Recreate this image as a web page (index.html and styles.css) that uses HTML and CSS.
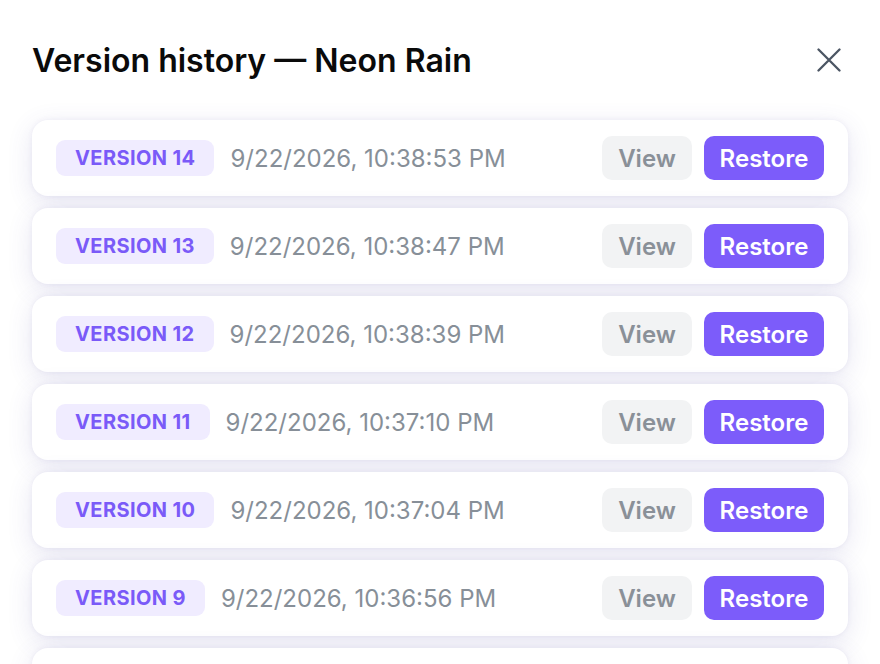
FILE: index.html
```html
<!DOCTYPE html>
<html lang="en">
<head>
<meta charset="utf-8">
<title>Version history</title>
<link rel="stylesheet" href="styles.css">
</head>
<body>
<div class="dialog">
  <header class="head">
    <h1 class="title">Version history — Neon Rain</h1>
    <button class="close" aria-label="Close">
      <svg width="24" height="24" viewBox="0 0 24 24" fill="none" stroke="#4b5563" stroke-width="2.3" stroke-linecap="round"><path d="M1.5 1.5l21 21M22.5 1.5l-21 21"/></svg>
    </button>
  </header>
  <ul class="list">
    <li class="item"><span class="badge">Version 14</span><span class="date">9/22/2026, 10:38:53 PM</span><span class="actions"><button class="btn view">View</button><button class="btn restore">Restore</button></span></li>
    <li class="item"><span class="badge">Version 13</span><span class="date">9/22/2026, 10:38:47 PM</span><span class="actions"><button class="btn view">View</button><button class="btn restore">Restore</button></span></li>
    <li class="item"><span class="badge">Version 12</span><span class="date">9/22/2026, 10:38:39 PM</span><span class="actions"><button class="btn view">View</button><button class="btn restore">Restore</button></span></li>
    <li class="item"><span class="badge">Version 11</span><span class="date">9/22/2026, 10:37:10 PM</span><span class="actions"><button class="btn view">View</button><button class="btn restore">Restore</button></span></li>
    <li class="item"><span class="badge">Version 10</span><span class="date">9/22/2026, 10:37:04 PM</span><span class="actions"><button class="btn view">View</button><button class="btn restore">Restore</button></span></li>
    <li class="item"><span class="badge">Version 9</span><span class="date">9/22/2026, 10:36:56 PM</span><span class="actions"><button class="btn view">View</button><button class="btn restore">Restore</button></span></li>
    <li class="item item-peek" aria-hidden="true"></li>
  </ul>
</div>
</body>
</html>
```
FILE: styles.css
```css
* { box-sizing: border-box; }
html, body { margin: 0; padding: 0; background: #ffffff; }
body {
  font-family: Inter, "Noto Sans", sans-serif;
  color: #111111;
  overflow: hidden;
  height: 664px;
}
.dialog {
  padding: 36px 32px 0 32px;
}
.head {
  display: flex;
  align-items: center;
  justify-content: space-between;
  height: 48px;
  margin-bottom: 36px;
}
.title {
  margin: 0;
  font-size: 32px;
  font-weight: 600;
  letter-spacing: 0;
  color: #0a0a0a;
}
.close {
  background: none;
  border: 0;
  padding: 0;
  width: 24px;
  height: 24px;
  margin-right: 7px;
  display: flex;
  cursor: pointer;
}
.list {
  list-style: none;
  margin: 0;
  padding: 0;
  display: flex;
  flex-direction: column;
  gap: 12px;
}
.item {
  display: flex;
  align-items: center;
  height: 76px;
  flex: none;
  padding: 0 24px;
  background: #ffffff;
  border-radius: 16px;
  box-shadow: 0 6px 26px rgba(80, 70, 160, 0.14), 0 0 5px rgba(80, 70, 160, 0.07);
}
.badge {
  display: inline-flex;
  align-items: center;
  height: 36px;
  padding: 0 19px;
  border-radius: 9px;
  background: #f0ecff;
  color: #7a5af8;
  font-size: 20px;
  font-weight: 700;
  text-transform: uppercase;
  letter-spacing: 0.4px;
}
.date {
  margin-left: 16px;
  font-size: 24px;
  color: #878f98;
}
.actions {
  margin-left: auto;
  display: flex;
  gap: 12px;
}
.btn {
  height: 44px;
  border: 0;
  border-radius: 10px;
  font-family: inherit;
  font-size: 24px;
  font-weight: 600;
  cursor: pointer;
}
.view {
  width: 90px;
  background: #f2f3f4;
  color: #8a9098;
}
.restore {
  width: 120px;
  background: #7c5cfa;
  color: #ffffff;
}
```
